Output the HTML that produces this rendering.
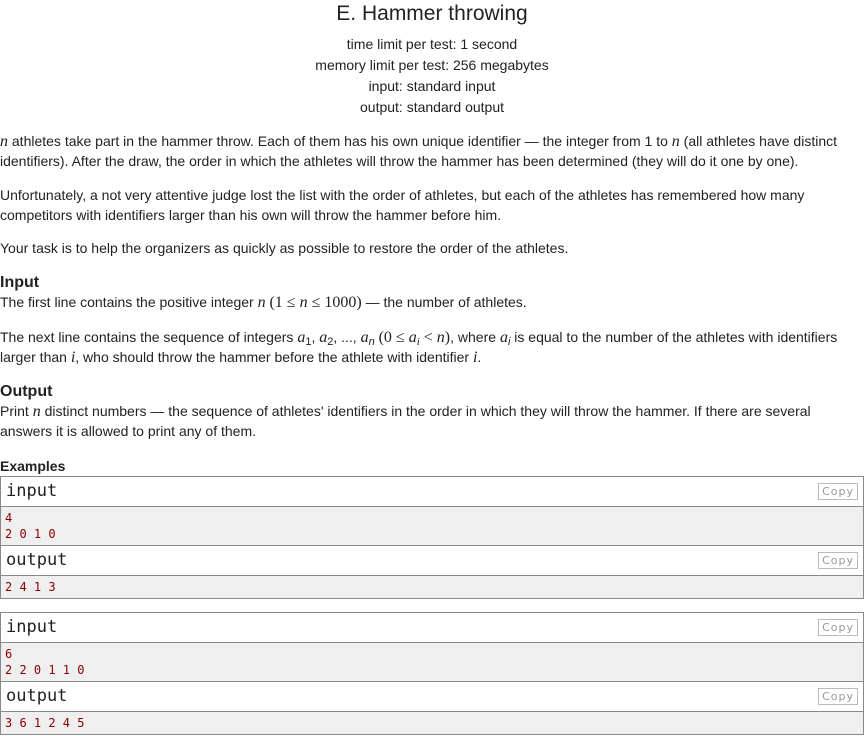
<!DOCTYPE html>
<html><head><meta charset="utf-8"><style>
body{margin:0;width:864px;height:736px;background:#fff;font-family:"Liberation Sans",sans-serif;color:#222;font-size:14px;position:relative;overflow:hidden}
.a{position:absolute;left:0;right:0;line-height:20px}
.c{text-align:center}
.m{font-family:"Liberation Serif",serif;font-style:italic;font-size:16px;line-height:0}
.mr{font-family:"Liberation Serif",serif;font-size:16px;line-height:0}
sub{font-size:11px;line-height:0;vertical-align:-3px}
.h{font-weight:bold;font-size:16px}
.box{position:absolute;left:0;width:862px;border:1px solid #888}
.hd{height:30px;border-bottom:1px solid #888;position:relative;font-family:"DejaVu Sans Mono",monospace;font-size:17px;line-height:28px;padding-left:5px;box-sizing:border-box;background:#fff}
.cp{position:absolute;right:5px;top:6px;border:1px solid #bbb;font-size:11px;color:#999;font-family:"DejaVu Sans",sans-serif;line-height:15px;padding:0 3px;letter-spacing:1px}
.dt{background:#efefef;font-family:"DejaVu Sans Mono",monospace;font-size:12px;color:#8b0000;line-height:16px;padding:3px 4px 3px;border-bottom:1px solid #888}
.box .dt:last-child{border-bottom:none}
</style></head><body>
<div class="a c" style="top:2px;font-size:21px;line-height:24px">E. Hammer throwing</div>
<div class="a c" style="top:34px;line-height:21px">time limit per test: 1 second<br>memory limit per test: 256 megabytes<br>input: standard input<br>output: standard output</div>
<div class="a" style="top:131px"><span class="m">n</span> athletes take part in the hammer throw. Each of them has his own unique identifier — the integer from 1 to <span class="m">n</span> (all athletes have distinct identifiers). After the draw, the order in which the athletes will throw the hammer has been determined (they will do it one by one).</div>
<div class="a" style="top:185px">Unfortunately, a not very attentive judge lost the list with the order of athletes, but each of the athletes has remembered how many competitors with identifiers larger than his own will throw the hammer before him.</div>
<div class="a" style="top:238px">Your task is to help the organizers as quickly as possible to restore the order of the athletes.</div>
<div class="a h" style="top:273px">Input</div>
<div class="a" style="top:292px">The first line contains the positive integer <span class="m">n</span> <span class="mr">(1 ≤ <i>n</i> ≤ 1000)</span> — the number of athletes.</div>
<div class="a" style="top:327px">The next line contains the sequence of integers <span class="m">a</span><sub>1</sub>, <span class="m">a</span><sub>2</sub>, ..., <span class="m">a</span><sub><i>n</i></sub> <span class="mr">(0 ≤ <i>a</i><sub><i>i</i></sub> &lt; <i>n</i>)</span>, where <span class="m">a</span><sub><i>i</i></sub> is equal to the number of the athletes with identifiers larger than <span class="m">i</span>, who should throw the hammer before the athlete with identifier <span class="m">i</span>.</div>
<div class="a h" style="top:382px">Output</div>
<div class="a" style="top:401px">Print <span class="m">n</span> distinct numbers — the sequence of athletes' identifiers in the order in which they will throw the hammer. If there are several answers it is allowed to print any of them.</div>
<div class="a" style="top:456px;font-weight:bold">Examples</div>
<div class="box" style="top:476px">
<div class="hd">input<span class="cp">Copy</span></div>
<div class="dt">4<br>2 0 1 0</div>
<div class="hd">output<span class="cp">Copy</span></div>
<div class="dt">2 4 1 3</div>
</div>
<div class="box" style="top:612px">
<div class="hd">input<span class="cp">Copy</span></div>
<div class="dt">6<br>2 2 0 1 1 0</div>
<div class="hd">output<span class="cp">Copy</span></div>
<div class="dt">3 6 1 2 4 5</div>
</div>
</body></html>
